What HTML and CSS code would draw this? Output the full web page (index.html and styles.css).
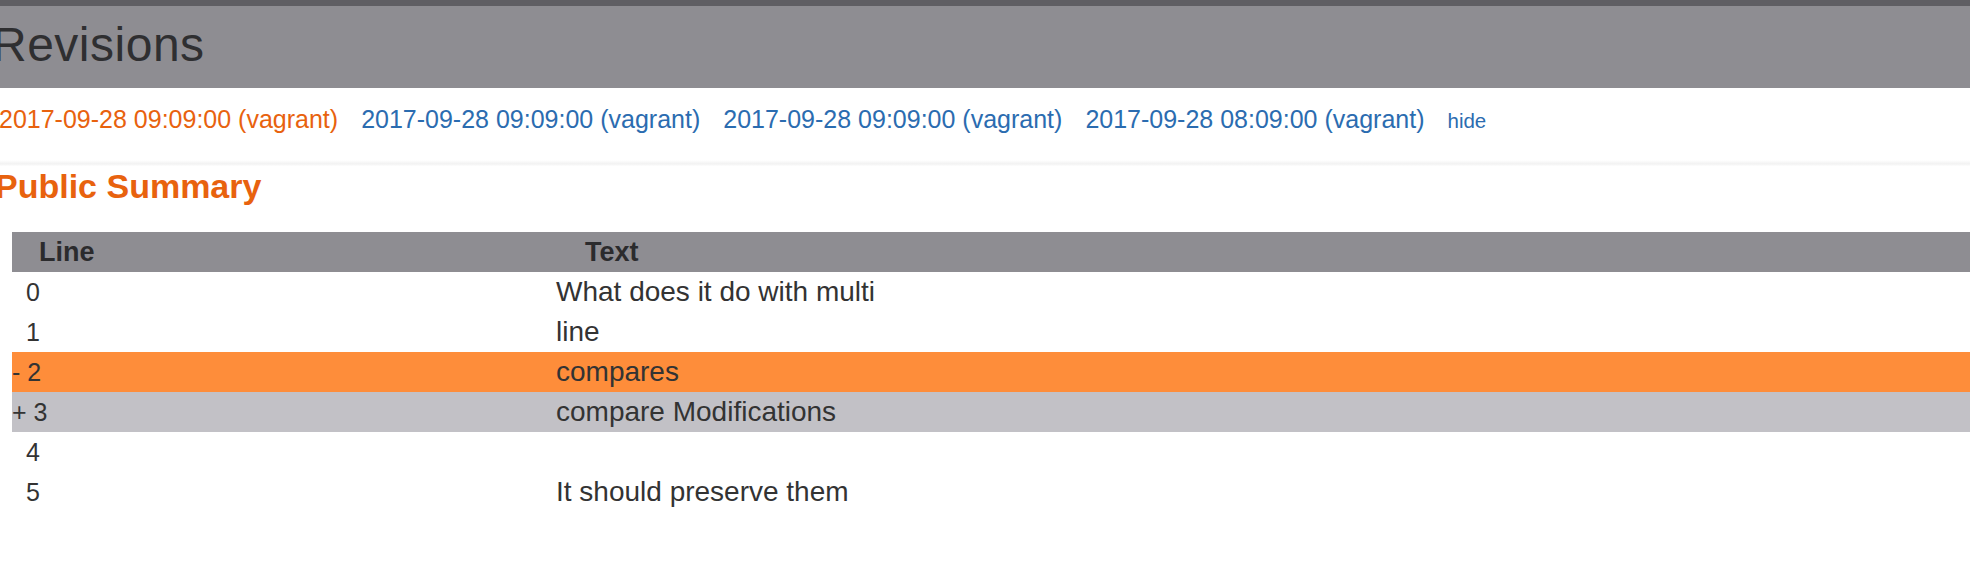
FILE: index.html
```html
<!DOCTYPE html>
<html lang="en">
<head>
<meta charset="utf-8">
<title>Revisions</title>
<link rel="stylesheet" href="styles.css">
</head>
<body>
<div class="topbar"></div>
<header class="page-head">
  <h1 class="page-title">Revisions</h1>
</header>
<nav class="revs">
  <span class="rev rev-current">2017-09-28 09:09:00 (vagrant)</span>
  <a class="rev" href="#">2017-09-28 09:09:00 (vagrant)</a>
  <a class="rev" href="#">2017-09-28 09:09:00 (vagrant)</a>
  <a class="rev" href="#">2017-09-28 08:09:00 (vagrant)</a>
  <a class="rev-hide" href="#">hide</a>
</nav>
<div class="divider"></div>
<section class="summary">
  <h2 class="section-title">Public Summary</h2>
  <table class="diff">
    <thead>
      <tr><th class="col-line">Line</th><th class="col-text">Text</th></tr>
    </thead>
    <tbody>
      <tr><td class="num">&nbsp;&nbsp;0</td><td class="txt">What does it do with multi</td></tr>
      <tr><td class="num">&nbsp;&nbsp;1</td><td class="txt">line</td></tr>
      <tr class="removed"><td class="num">- 2</td><td class="txt">compares</td></tr>
      <tr class="added"><td class="num">+ 3</td><td class="txt">compare Modifications</td></tr>
      <tr><td class="num">&nbsp;&nbsp;4</td><td class="txt"></td></tr>
      <tr><td class="num">&nbsp;&nbsp;5</td><td class="txt">It should preserve them</td></tr>
    </tbody>
  </table>
</section>
</body>
</html>
```
FILE: styles.css
```css
html, body {
  margin: 0;
  padding: 0;
  background: #ffffff;
  overflow: hidden;
}
body {
  font-family: "Liberation Sans", Arial, Helvetica, sans-serif;
  color: #333333;
  width: 1970px;
  height: 568px;
}
.topbar {
  height: 6px;
  background: #5f5e63;
}
.page-head {
  background: #8e8d92;
  height: 82px;
  box-sizing: border-box;
  padding-top: 12px;
}
.page-title {
  margin: 0 0 0 -8px;
  font-size: 48px;
  line-height: 53px;
  font-weight: normal;
  letter-spacing: 0.5px;
  color: #2f2f31;
}
.revs {
  display: flex;
  align-items: baseline;
  gap: 23px;
  height: 36px;
  padding: 13px 0 23px 0;
  margin-left: -1px;
  line-height: 36px;
}
.rev {
  font-size: 25px;
  color: #2b6cb0;
  text-decoration: none;
  white-space: nowrap;
}
.rev-current {
  color: #e8620e;
}
.rev-hide {
  font-size: 20.5px;
  color: #2b6cb0;
  text-decoration: none;
}
.divider {
  height: 6px;
  background: linear-gradient(#ffffff, #f3f3f3 60%, #f7f7f7 85%, #ffffff);
}
.summary {
  padding: 0;
}
.section-title {
  margin: 2px 0 28px -5px;
  font-size: 34px;
  line-height: 36px;
  font-weight: bold;
  letter-spacing: 0;
  color: #e8620e;
}
.diff {
  border-collapse: collapse;
  margin-left: 12px;
  width: 1958px;
  table-layout: fixed;
}
.diff th {
  background: #8e8d92;
  color: #2b2b2d;
  font-size: 27px;
  font-weight: bold;
  line-height: 40px;
  height: 40px;
  padding: 0;
  text-align: left;
}
.diff th.col-line {
  width: 544px;
  padding-left: 27px;
  box-sizing: border-box;
}
.diff th.col-text {
  padding-left: 29px;
}
.diff td {
  padding: 0;
  height: 40px;
  line-height: 40px;
  white-space: nowrap;
}
.diff td.num {
  font-size: 25px;
}
.diff td.txt {
  font-size: 28px;
}
.diff tr.removed td {
  background: #fe8d3a;
}
.diff tr.added td {
  background: #c2c1c6;
}
```
